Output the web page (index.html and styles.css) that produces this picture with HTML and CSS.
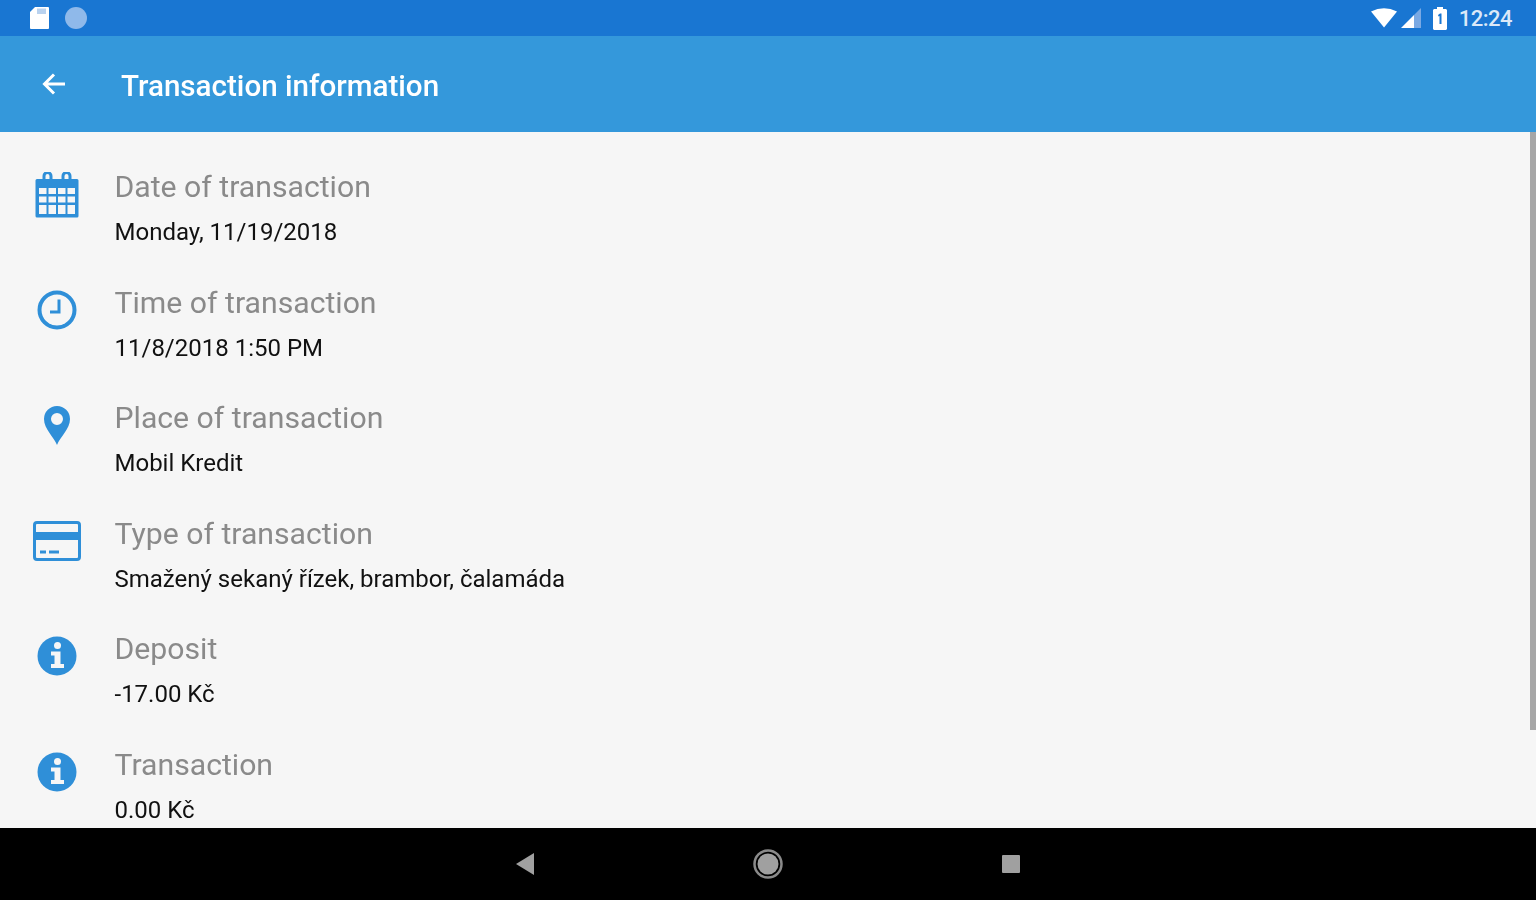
FILE: index.html
```html
<!DOCTYPE html>
<html lang="en">
<head>
    <meta charset="UTF-8">
    <meta name="viewport" content="width=device-width, initial-scale=1.0">
    <title>Transaction information</title>
    <link rel="stylesheet" href="styles.css">
</head>
<body>
    <div class="status-bar">
        <div class="status-left">
            <svg width="22" height="24" viewBox="0 0 22 24"><path d="M7 1h13a1 1 0 0 1 1 1v20a1 1 0 0 1-1 1H3a1 1 0 0 1-1-1V6z" fill="#fff"/><path d="M9 2.500h9v5.500H9z" fill="#b9d2ef"/></svg>
            <svg width="24" height="24" viewBox="0 0 24 24"><circle cx="12" cy="12" r="11" fill="#8fb9ea"/></svg>
        </div>
        <div class="status-right">
            <svg class="wifi" width="28" height="20" viewBox="0 0 28 20"><path d="M1 3.500Q14-3 27 3.500L14 19.500z" fill="#fff"/></svg>
            <svg class="signal" width="22" height="22" viewBox="0 0 22 22"><path d="M1 21 14 8v13z" fill="#fff"/><path d="M14 8l7-7v20h-7z" fill="#7aa9e3"/></svg>
            <svg class="battery" width="14" height="24" viewBox="0 0 14 24"><path d="M4 1h6v2h3l1 1v19l-1 1H1l-1-1V4l1-1h3z" fill="#fff"/><path d="M5 9l2-1.500h1.500V18h-2V10l-1 .5z" fill="#1976d2"/></svg>
            <span class="clock">12:24</span>
        </div>
    </div>

    <header class="app-bar">
        <svg class="back" width="28" height="28" viewBox="0 0 28 28"><path d="M25 14H5M14 4.500 4.500 14l9.500 9.500" fill="none" stroke="#fff" stroke-width="3"/></svg>
        <h1 class="app-title">Transaction information</h1>
    </header>

    <main class="content">
        <div class="scroll-thumb"></div>

        <div class="row">
            <div class="row-icon calendar">
                <svg width="44" height="46" viewBox="0 0 44 46">
                    <path d="M2 7h40a1.500 1.500 0 0 1 1.500 1.500V44a1.500 1.500 0 0 1-1.500 1.500H2A1.500 1.500 0 0 1 .5 44V8.500A1.500 1.500 0 0 1 2 7z" fill="#2f8fd8"/>
                    <path d="M9 9V4a3.500 3.500 0 0 1 7 0v5M28 9V4a3.500 3.500 0 0 1 7 0v5" fill="none" stroke="#2f8fd8" stroke-width="3"/>
                    <g fill="#f6f6f6">
                        <rect x="4" y="16" width="7.500" height="6"/><rect x="13.500" y="16" width="7.500" height="6"/><rect x="23" y="16" width="7.500" height="6"/><rect x="32.500" y="16" width="7.500" height="6"/>
                        <rect x="4" y="24.500" width="7.500" height="6"/><rect x="13.500" y="24.500" width="7.500" height="6"/><rect x="23" y="24.500" width="7.500" height="6"/><rect x="32.500" y="24.500" width="7.500" height="6"/>
                        <rect x="4" y="33" width="7.500" height="9"/><rect x="13.500" y="33" width="7.500" height="9"/><rect x="23" y="33" width="7.500" height="9"/><rect x="32.500" y="33" width="7.500" height="9"/>
                    </g>
                </svg>
            </div>
            <div class="row-text">
                <div class="label">Date of transaction</div>
                <div class="value">Monday, 11/19/2018</div>
            </div>
        </div>

        <div class="row">
            <div class="row-icon">
                <svg width="40" height="40" viewBox="0 0 40 40"><circle cx="20" cy="20" r="17.500" fill="none" stroke="#2f8fd8" stroke-width="4"/><path d="M22 9.500V22h-9" fill="none" stroke="#2f8fd8" stroke-width="3"/></svg>
            </div>
            <div class="row-text">
                <div class="label">Time of transaction</div>
                <div class="value">11/8/2018 1:50 PM</div>
            </div>
        </div>

        <div class="row">
            <div class="row-icon">
                <svg class="pin" width="28" height="40" viewBox="0 0 28 40"><path fill-rule="evenodd" d="M14 40C11 32 1 24 1 14a13 13 0 0 1 26 0c0 10-10 18-13 26zM14 8a6 6 0 1 0 0 12 6 6 0 0 0 0-12z" fill="#2f8fd8"/></svg>
            </div>
            <div class="row-text">
                <div class="label">Place of transaction</div>
                <div class="value">Mobil Kredit</div>
            </div>
        </div>

        <div class="row">
            <div class="row-icon">
                <svg width="48" height="40" viewBox="0 0 48 40"><rect x="1.500" y="1.500" width="45" height="37" rx="2.500" fill="none" stroke="#2f8fd8" stroke-width="3"/><rect x="2" y="11" width="44" height="8" fill="#2f8fd8"/><path d="M7 31h6M16 31h10" stroke="#2f8fd8" stroke-width="3"/></svg>
            </div>
            <div class="row-text">
                <div class="label">Type of transaction</div>
                <div class="value">Smažený sekaný řízek, brambor, čalamáda</div>
            </div>
        </div>

        <div class="row">
            <div class="row-icon">
                <svg width="40" height="40" viewBox="0 0 40 40"><circle cx="20" cy="20" r="19.500" fill="#2f8fd8"/><circle cx="20.500" cy="9.500" r="3.500" fill="#f6f6f6"/><path d="M14 15.500h9.500V28H27v4H14v-4h3.500v-8.500H14z" fill="#f6f6f6"/></svg>
            </div>
            <div class="row-text">
                <div class="label">Deposit</div>
                <div class="value">-17.00 Kč</div>
            </div>
        </div>

        <div class="row">
            <div class="row-icon">
                <svg width="40" height="40" viewBox="0 0 40 40"><circle cx="20" cy="20" r="19.500" fill="#2f8fd8"/><circle cx="20.500" cy="9.500" r="3.500" fill="#f6f6f6"/><path d="M14 15.500h9.500V28H27v4H14v-4h3.500v-8.500H14z" fill="#f6f6f6"/></svg>
            </div>
            <div class="row-text">
                <div class="label">Transaction</div>
                <div class="value">0.00 Kč</div>
            </div>
        </div>
    </main>

    <nav class="nav-bar">
        <svg width="20" height="24" viewBox="0 0 20 24"><path d="M19 1v22L1 12z" fill="#a0a0a0"/></svg>
        <svg width="30" height="32" viewBox="0 0 30 32"><circle cx="15" cy="16" r="13.500" fill="none" stroke="#8a8a8a" stroke-width="2.500"/><circle cx="15" cy="16" r="10.500" fill="#a0a0a0"/></svg>
        <svg width="20" height="20" viewBox="0 0 20 20"><rect x="1" y="1" width="18" height="18" rx="1" fill="#a0a0a0"/></svg>
    </nav>
</body>
</html>
```

FILE: styles.css
```css
* {
    box-sizing: border-box;
}

html, body {
    height: 100%;
}

body {
    margin: 0;
    display: flex;
    flex-direction: column;
    height: 900px;
    overflow: hidden;
    font-family: Roboto, "Liberation Sans", sans-serif;
    background-color: #f6f6f6;
    filter: blur(0.6px);
}

.status-bar {
    height: 36px;
    flex: none;
    display: flex;
    justify-content: space-between;
    align-items: center;
    padding: 0 24px 0 28px;
    background-color: #1976d2;
}

.status-left {
    display: flex;
    align-items: center;
    gap: 14px;
}

.status-right {
    display: flex;
    align-items: center;
}

.signal {
    margin-left: 2px;
}

.battery {
    margin-left: 11px;
    margin-right: 12px;
}

.clock {
    color: #dbe9f8;
    font-size: 22px;
    font-weight: 500;
    letter-spacing: -0.5px;
}

.app-bar {
    height: 96px;
    flex: none;
    display: flex;
    align-items: center;
    padding-left: 40px;
    background-color: #3498db;
}

.back {
    flex: none;
}

.app-title {
    margin: 4px 0 0 53px;
    color: #fff;
    font-size: 29.6px;
    font-weight: 500;
}

.content {
    position: relative;
    height: 696px;
    flex: none;
    overflow: hidden;
    padding-top: 32px;
}

.scroll-thumb {
    position: absolute;
    top: 0;
    right: 0;
    width: 6px;
    height: 598px;
    background-color: #a6a6a6;
}

.row {
    display: flex;
    height: 115.5px;
}

.row-icon {
    width: 114.5px;
    flex: none;
    display: flex;
    justify-content: center;
    align-items: flex-start;
    padding-top: 10px;
    padding-right: 1px;
}

.row-icon.calendar {
    padding-top: 8px;
}

.pin {
    margin-left: 1px;
}

.label {
    color: #8a8a8a;
    font-size: 30.2px;
    line-height: 45px;
}

.value {
    color: #111;
    font-size: 24px;
    line-height: 46px;
}

.nav-bar {
    height: 72px;
    flex: none;
    display: flex;
    justify-content: center;
    align-items: center;
    gap: 218px;
    background-color: #000;
}
```
